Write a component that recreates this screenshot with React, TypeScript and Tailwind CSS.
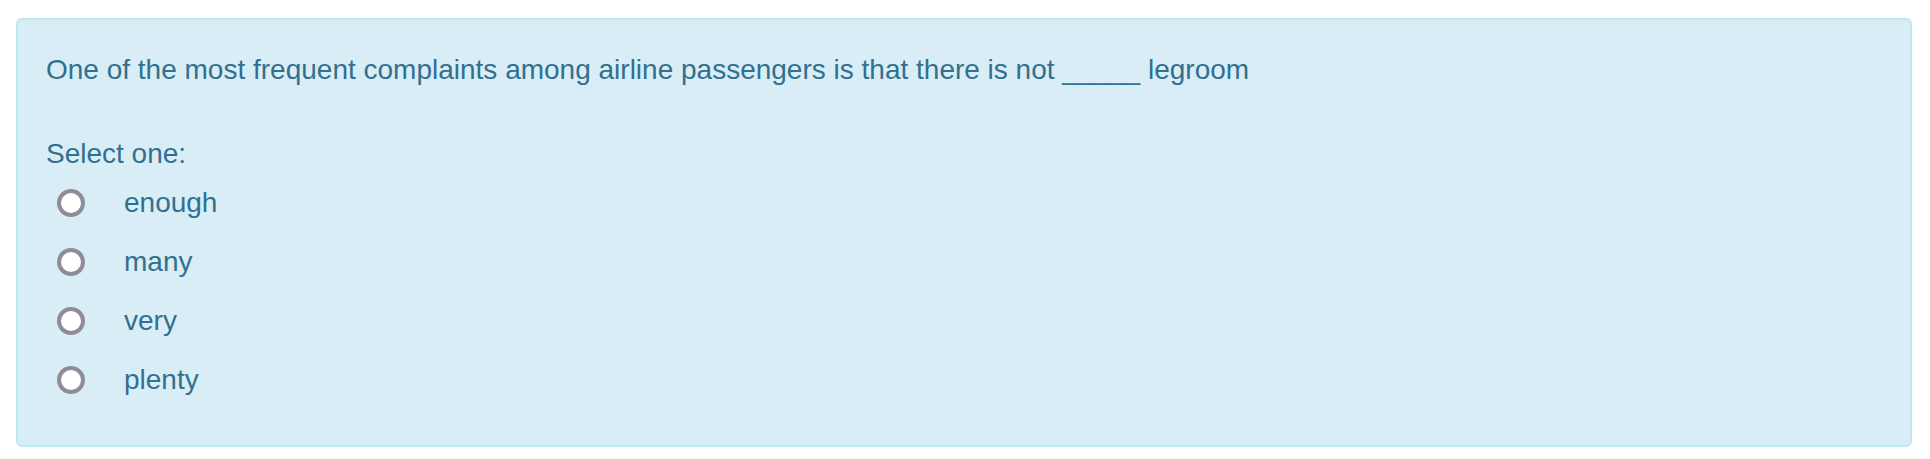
import React from "react";

const options = ["enough", "many", "very", "plenty"];

export default function App() {
  return (
    <div className="w-[1930px] h-[459px] bg-white pt-[18px] pl-[16px]" style={{ fontFamily: '"Liberation Sans", Arial, sans-serif' }}>
      <div className="w-[1896px] h-[429px] rounded-[6px] border-2 border-[#bce8f1] bg-[#d9edf7] text-[#31708f] pl-[28px] pr-[28px] pt-[30px]">
        <div className="text-[28px] leading-[40px]">
          One of the most frequent complaints among airline passengers is that there is not _____ legroom
        </div>
        <div className="mt-[44px] text-[28px] leading-[40px]">Select one:</div>
        <div className="flex flex-col">
          {options.map((o) => (
            <div key={o} className="flex items-center h-[58.9px]">
              <div className="ml-[11px] w-[28px] h-[28px] rounded-full border-[4.5px] border-[#8e8c98] bg-white shrink-0" />
              <div className="ml-[39px] text-[28px] leading-[40px]">{o}</div>
            </div>
          ))}
        </div>
      </div>
    </div>
  );
}
